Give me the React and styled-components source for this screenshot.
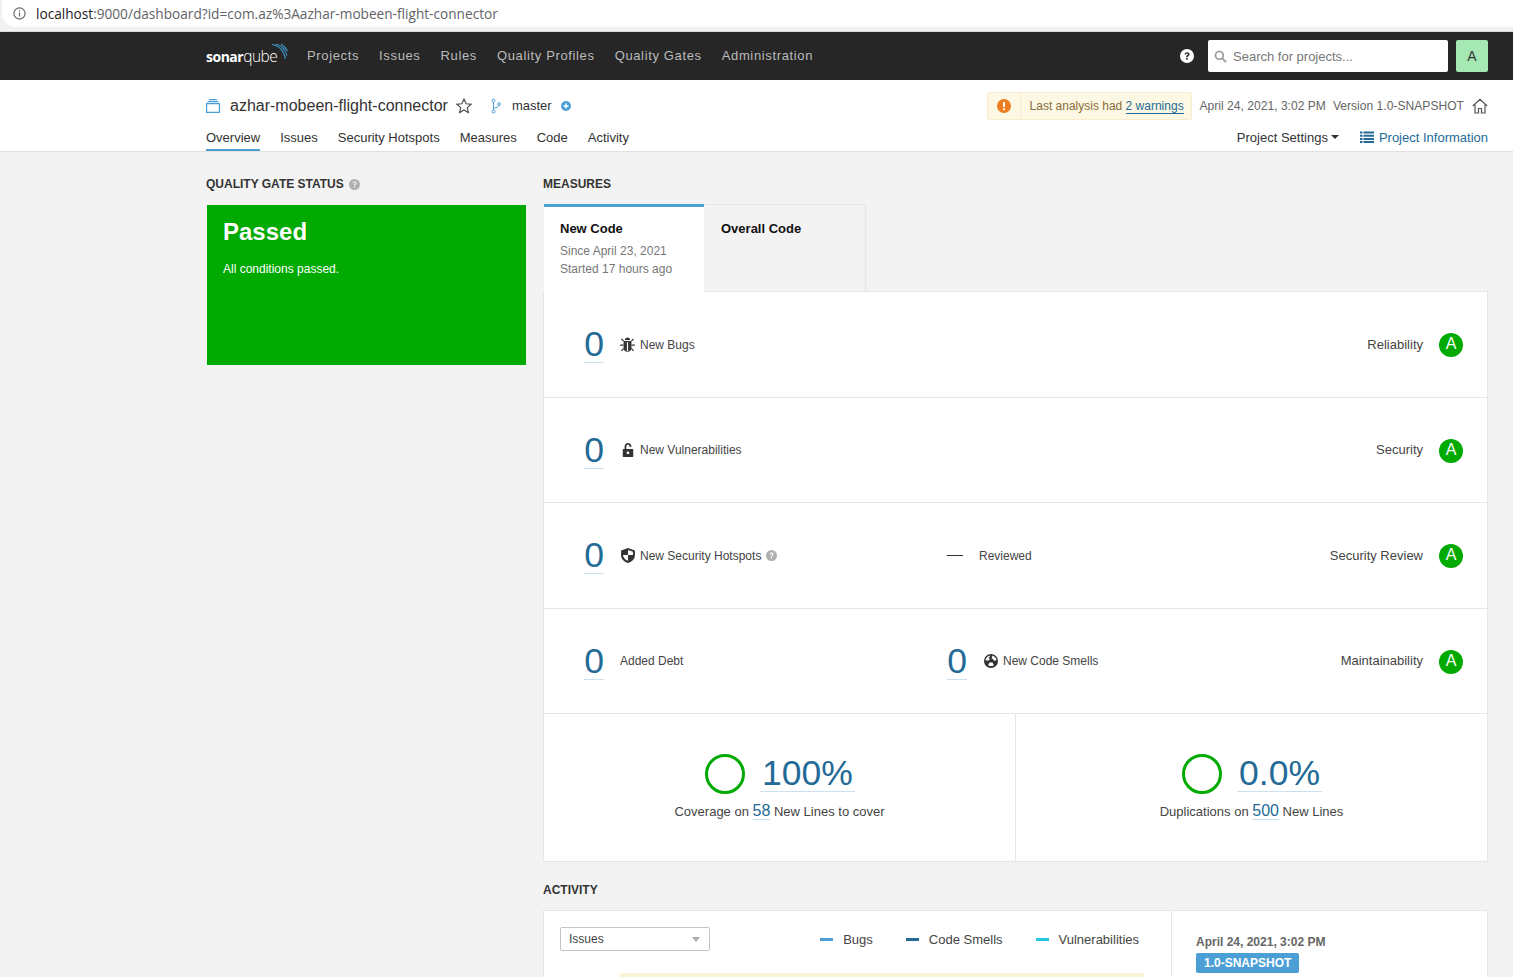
import React from "react";
import styled, { createGlobalStyle } from "styled-components";

const Global = createGlobalStyle`
  html, body { margin: 0; padding: 0; height: 977px; overflow: hidden; background: #f3f3f3; }
  body { font-family: "Liberation Sans", Arial, sans-serif; font-size: 13px; color: #333; }
  * { box-sizing: border-box; }
`;

const BrowserBar = styled.div`
  height: 32px;
  background: #f1f1f1;
  border-bottom: 1px solid #d8d8d8;
  padding: 0 0 4px 2px;
`;
const UrlPill = styled.div`
  height: 27px;
  background: #fff;
  border-radius: 0 0 0 14px;
  display: flex;
  align-items: center;
  padding-left: 11px;
  gap: 10px;
  font-family: "Open Sans", sans-serif;
  font-size: 13.65px;
  color: #5f6368;
  span b { font-weight: 400; color: #202124; }
`;

const Nav = styled.nav`
  height: 48px;
  background: #262626;
  display: flex;
  align-items: center;
  padding: 0 25px 0 206px;
`;
const Logo = styled.div`
  position: relative;
  width: 84px;
  height: 24px;
  margin-right: 17px;
  color: #fff;
  font-family: "Open Sans", sans-serif;
  line-height: 24px;
  white-space: nowrap;
  b { font-weight: 700; font-size: 14px; letter-spacing: -0.5px; }
  span { font-weight: 300; font-size: 15.5px; letter-spacing: -0.5px; }
  svg { position: absolute; right: 1px; top: -1px; }
`;
const NavLink = styled.a`
  color: #bbb;
  font-size: 13px;
  letter-spacing: 0.64px;
  margin: -2px 20px 0 0;
`;
const NavRight = styled.div`
  margin-left: auto;
  display: flex;
  align-items: center;
`;
const Search = styled.div`
  width: 240px;
  height: 32px;
  margin-left: 14px;
  background: #fff;
  border-radius: 2px;
  display: flex;
  align-items: center;
  padding-left: 6px;
  gap: 6px;
  color: #777;
  font-size: 13px;
`;
const Avatar = styled.div`
  width: 32px;
  height: 32px;
  margin-left: 8px;
  background: #a5e8b4;
  border-radius: 2px;
  display: flex;
  align-items: center;
  justify-content: center;
  color: #333;
  font-size: 14px;
`;

const ContextBar = styled.header`
  height: 72px;
  background: #fff;
  border-bottom: 1px solid #e1e1e1;
  padding: 0 25px 0 206px;
`;
const ContextTop = styled.div`
  height: 49px;
  padding-top: 12px;
  display: flex;
  align-items: flex-start;
`;
const Crumbs = styled.div`
  display: flex;
  align-items: center;
  height: 28px;
`;
const ProjectName = styled.span`
  font-size: 16px;
  color: #333;
  margin: 0 8px 0 10px;
`;
const Branch = styled.span`
  font-size: 13px;
  margin: -2px 9px 0 11px;
`;
const ContextRight = styled.div`
  margin-left: auto;
  display: flex;
  align-items: center;
  height: 28px;
  font-size: 12.1px;
  color: #666;
`;
const WarnBox = styled.div`
  height: 28px;
  width: 205px;
  display: flex;
  background: #fcf8e3;
  border: 1px solid #faebcc;
  border-radius: 2px;
  color: #8a6d3b;
  font-size: 12px;
  margin-right: 8px;
`;
const WarnIcon = styled.div`
  width: 33px;
  border-right: 1px solid #faebcc;
  display: flex;
  align-items: center;
  justify-content: center;
`;
const WarnText = styled.div`
  padding-left: 9px;
  line-height: 26px;
  white-space: nowrap;
  a { color: #236a97; border-bottom: 1px solid #236a97; }
`;
const Version = styled.span`
  margin: 0 8px 0 7px;
`;
const ContextBottom = styled.div`
  display: flex;
  align-items: flex-start;
  justify-content: space-between;
  height: 22px;
`;
const Tabs = styled.div`
  display: flex;
  gap: 20px;
`;
const Tab = styled.a`
  height: 22px;
  line-height: 18px;
  font-size: 13px;
  color: #333;
  border-bottom: 2px solid ${(p) => (p.$active ? "#4b9fd5" : "transparent")};
`;
const ContextActions = styled.div`
  display: flex;
  align-items: center;
  height: 16px;
`;
const Settings = styled.span`
  display: flex;
  align-items: center;
  gap: 3px;
  font-size: 13px;
  margin-right: 21px;
  &::after {
    content: "";
    border: 4px solid transparent;
    border-top-color: #333;
    border-bottom: 0;
  }
`;
const InfoLink = styled.a`
  display: flex;
  align-items: center;
  gap: 5px;
  color: #236a97;
  font-size: 13px;
`;

const Page = styled.main`
  display: grid;
  grid-template-columns: 320px 945px;
  column-gap: 17px;
  padding: 25px 25px 0 206px;
  height: 825px;
  overflow: hidden;
`;
const Heading = styled.h3`
  margin: 0 0 14px;
  height: 14px;
  font-size: 12px;
  line-height: 14px;
  font-weight: 700;
  color: #333;
  display: flex;
  align-items: center;
  gap: 5px;
`;
const GateBox = styled.div`
  margin-left: 1px;
  height: 160px;
  background: #00aa00;
  color: #fff;
  padding: 12px 16px;
`;
const GateTitle = styled.div`
  font-size: 24px;
  font-weight: 700;
  line-height: 30px;
  margin-bottom: 14px;
`;
const GateText = styled.div`
  font-size: 12px;
  line-height: 16px;
`;

const PeriodTabs = styled.div`
  display: flex;
  height: 88px;
  margin-left: 1px;
  margin-top: -1px;
  position: relative;
  z-index: 1;
`;
const PeriodTab = styled.div`
  width: ${(p) => (p.$active ? "160px" : "161px")};
  height: ${(p) => (p.$active ? "88px" : "87px")};
  padding: ${(p) => (p.$active ? "14px 16px" : "16px 16px")};
  background: ${(p) => (p.$active ? "#fff" : "#f3f3f3")};
  border-top: ${(p) => (p.$active ? "3px solid #4b9fd5" : "1px solid #e6e6e6")};
  border-right: ${(p) => (p.$active ? "0" : "1px solid #e6e6e6")};
  margin-left: ${(p) => (p.$active ? "0" : "1px")};
  font-size: 12px;
  color: #777;
  line-height: 18px;
  b {
    display: block;
    font-size: 13px;
    line-height: 16px;
    color: #111;
    margin-bottom: 5px;
  }
`;
const Panel = styled.section`
  background: #fff;
  border: 1px solid #e6e6e6;
`;
const MeasurePanel = styled(Panel)`
  margin-top: -1px;
`;
const MeasureRow = styled.div`
  height: ${(p) => p.$h || 105}px;
  display: grid;
  grid-template-columns: 363px 1fr auto;
  align-items: center;
  padding: 0 24px 0 40px;
  border-bottom: 1px solid #e6e6e6;
`;
const Cell = styled.div`
  display: flex;
  align-items: center;
`;
const Value = styled.a`
  display: block;
  color: #236a97;
  font-size: 35.5px;
  line-height: 36px;
  width: 20px;
  text-align: center;
  border-bottom: 1px solid #cce0ed;
  margin-right: 16px;
`;
const Label = styled.span`
  display: flex;
  align-items: center;
  gap: 5px;
  font-size: 12px;
  color: #444;
`;
const IconSlot = styled.span`
  display: flex;
  justify-content: center;
  width: 15px;
`;
const Dash = styled.span`
  width: 16px;
  height: 1px;
  background: #333;
  margin-right: 16px;
`;
const Rating = styled.div`
  display: flex;
  align-items: center;
  gap: 16px;
  font-size: 13px;
  color: #444;
  margin-top: -1px;
`;
const Badge = styled.span`
  width: 24px;
  height: 24px;
  margin-top: 2px;
  border-radius: 50%;
  background: #00aa00;
  color: #fff;
  font-size: 16px;
  line-height: 22px;
  text-align: center;
`;
const CoverRow = styled.div`
  display: grid;
  grid-template-columns: 471px 1fr;
  height: 147px;
`;
const CoverCell = styled.div`
  border-left: ${(p) => (p.$split ? "1px solid #e6e6e6" : "0")};
  display: flex;
  flex-direction: column;
  align-items: center;
  padding-top: 39px;
`;
const CoverTop = styled.div`
  display: flex;
  align-items: center;
  gap: 15px;
  height: 42px;
  margin-left: 1px;
`;
const Ring = styled.span`
  width: 40px;
  height: 40px;
  border-radius: 50%;
  border: 3px solid #00aa00;
`;
const Percent = styled.a`
  color: #236a97;
  font-size: 35.5px;
  line-height: 36px;
  margin-top: -2px;
  padding: 0 2px;
  border-bottom: 1px solid #cce0ed;
`;
const CoverText = styled.div`
  margin-top: 6px;
  font-size: 13px;
  line-height: 20px;
  color: #444;
  a {
    color: #236a97;
    font-size: 16px;
    border-bottom: 1px solid #cce0ed;
  }
`;
const ActivityHead = styled(Heading)`
  margin: 21px 0 13px;
`;
const ActivityPanel = styled(Panel)`
  display: grid;
  grid-template-columns: 628px 1fr;
  height: 200px;
`;
const ChartSide = styled.div`
  padding: 16px;
  border-right: 1px solid #e6e6e6;
`;
const ChartHead = styled.div`
  display: flex;
  align-items: center;
  justify-content: space-between;
`;
const SelectBox = styled.div`
  width: 150px;
  height: 24px;
  border: 1px solid #c4c4c4;
  border-radius: 2px;
  display: flex;
  align-items: center;
  justify-content: space-between;
  padding: 0 9px 0 8px;
  font-size: 12px;
  color: #444;
  &::after {
    content: "";
    border: 4px solid transparent;
    border-top: 5px solid #aaa;
    border-bottom: 0;
  }
`;
const Legend = styled.div`
  display: flex;
  gap: 33px;
  margin-right: 16px;
`;
const LegendItem = styled.span`
  display: flex;
  align-items: center;
  gap: 10px;
  font-size: 13px;
  color: #444;
  &::before {
    content: "";
    width: 13px;
    height: 3px;
    background: ${(p) => p.$color};
  }
`;
const ChartBand = styled.div`
  height: 40px;
  margin: 22px 11px 0 60px;
  background: #fcf4d6;
`;
const EventSide = styled.div`
  padding: 24px;
`;
const EventDate = styled.div`
  font-size: 12px;
  font-weight: 700;
  color: #666;
  line-height: 14px;
`;
const EventTag = styled.span`
  display: inline-block;
  margin-top: 4px;
  padding: 0 8px;
  height: 20px;
  line-height: 20px;
  background: #4b9fd5;
  color: #fff;
  border-radius: 2px;
  font-size: 12px;
  font-weight: 700;
`;

const BugIcon = () => (
  <svg width="15" height="15" viewBox="0.5 0.5 13 13" fill="#333">
    <path d="M4.6 3.2C4.8 1.8 5.8 1 7 1s2.2.8 2.4 2.2z" />
    <path d="M3.6 4h6.8v6c0 1.9-1.5 3.3-3.4 3.3S3.6 11.9 3.6 10zM6.5 5v7.6h1V5z" fillRule="evenodd" />
    <path d="M1.4 2.6l.7-.7L4 3.8l-.7.7zM12.6 2.6l-.7-.7L10 3.8l.7.7zM.6 7h3v1h-3zM10.4 7h3v1h-3zM3.4 10l.6.8-1.8 2-.8-.7zM10.6 10l-.6.8 1.8 2 .8-.7z" />
  </svg>
);
const LockIcon = () => (
  <svg width="12" height="14" viewBox="2 1 10 12" fill="#333">
    <path d="M3.2 6.2h.9V3.9C4.1 2.2 5.4 1 7 1s2.9 1.2 2.9 2.9v.5H8.4v-.5C8.4 3.1 7.8 2.5 7 2.5S5.6 3.1 5.6 3.9v2.3h5.2c.4 0 .7.3.7.7v5.4c0 .4-.3.7-.7.7H3.2c-.4 0-.7-.3-.7-.7V6.9c0-.4.3-.7.7-.7zM7 8.2a1.2 1.2 0 100 2.4 1.2 1.2 0 000-2.4z" fillRule="evenodd" />
  </svg>
);
const ShieldIcon = () => (
  <svg width="14" height="15" viewBox="1 0.6 12 13" fill="#333">
    <path d="M7 .6l6 2.1v3.9c0 3.3-2.5 5.9-6 6.9-3.5-1-6-3.6-6-6.9V2.7zM7 2.3v4.4H2.7c.2 2.5 2 4.2 4.3 5V6.7h4.3V3.9z" fillRule="evenodd" />
  </svg>
);
const SmellIcon = () => (
  <svg width="14" height="14" viewBox="0 0 14 14" fill="#333">
    <path d="M7 0a7 7 0 110 14A7 7 0 017 0zM5.6 1.6a5.6 5.6 0 00-4 4c-.1.5.2.9.6.9h2.5c.3-.6.6-1 1.1-1.3L4.6 3.4 6 2.6c-.1-.6-.1-1.1-.4-1zM8.4 1.6L7.6 4.6c.8.1 1.4.5 1.8 1.1l.2.8h2.3c.4 0 .7-.4.6-.9a5.6 5.6 0 00-4.100-4zM7 8.6c-.5 0-.9-.1-1.300-.3l-1.300 2.200c-.2.3-.1.7.2.9a5.400 5.400 0 004.800 0c.3-.2.4-.6.2-.9L8.300 8.300c-.4.2-.8.3-1.300.3z" fillRule="evenodd" />
    <circle cx="7" cy="7" r="1" />
  </svg>
);
const HelpIcon = ({ size = 12, color = "#b0b0b0", mark = "#f3f3f3" }) => (
  <svg width={size} height={size} viewBox="0 0 16 16">
    <circle cx="8" cy="8" r="8" fill={color} />
    <path d="M5.3 6.2C5.4 4.5 6.6 3.6 8.1 3.6c1.6 0 2.8 1 2.8 2.4 0 1.1-.6 1.7-1.4 2.2-.6.4-.8.6-.8 1.2H7c0-1.2.4-1.8 1.2-2.3.6-.4.9-.6.9-1.1 0-.5-.4-.8-1-.8-.7 0-1 .4-1.1 1zM7 10.4h1.8v1.8H7z" fill={mark} />
  </svg>
);

const Measure = ({ icon, text, help }) => (
  <Cell>
    <Value>0</Value>
    <Label>
      {icon && <IconSlot>{icon}</IconSlot>}
      {text}
      {help && <HelpIcon size={11} mark="#fff" />}
    </Label>
  </Cell>
);

const Rate = ({ name }) => (
  <Rating>
    {name}
    <Badge>A</Badge>
  </Rating>
);

export default function App() {
  return (
    <>
      <Global />
      <BrowserBar>
        <UrlPill>
          <svg width="13" height="13" viewBox="0 0 14 14" fill="none" stroke="#5f6368" strokeWidth="1.2">
            <circle cx="7" cy="7" r="6" />
            <path d="M7 6v4.2M7 3.6v1.2" />
          </svg>
          <span><b>localhost</b>:9000/dashboard?id=com.az%3Aazhar-mobeen-flight-connector</span>
        </UrlPill>
      </BrowserBar>
      <Nav>
        <Logo>
          <b>sonar</b><span>qube</span>
          <svg width="18" height="20" viewBox="0 0 18 20" fill="none" stroke="#3d8fbf" strokeWidth="1.2">
            <path d="M1 1.5C8 2.5 13 8 14.5 16M5 1C10.5 2.5 14.5 7 16 12.5M10 1C12.5 2.5 15 5 16.5 8" />
          </svg>
        </Logo>
        <NavLink>Projects</NavLink>
        <NavLink>Issues</NavLink>
        <NavLink>Rules</NavLink>
        <NavLink>Quality Profiles</NavLink>
        <NavLink>Quality Gates</NavLink>
        <NavLink>Administration</NavLink>
        <NavRight>
          <HelpIcon size={14} color="#fff" mark="#262626" />
          <Search>
            <svg width="13" height="13" viewBox="0 0 14 14" fill="none" stroke="#999" strokeWidth="1.8">
              <circle cx="5.8" cy="5.8" r="4.2" />
              <path d="M9 9l4 4" />
            </svg>
            Search for projects...
          </Search>
          <Avatar>A</Avatar>
        </NavRight>
      </Nav>
      <ContextBar>
        <ContextTop>
          <Crumbs>
            <svg width="14" height="14" viewBox="0 0 14 14" fill="none" stroke="#4b9fd5" strokeWidth="1.2">
              <path d="M.6 4.6h12.8v8.800H.6zM1.500 2.600h11M3 .7h8" />
            </svg>
            <ProjectName>azhar-mobeen-flight-connector</ProjectName>
            <svg width="16" height="16" viewBox="0 0 16 16" fill="none" stroke="#444" strokeWidth="1.1">
              <path d="M8 1l2.100 4.700 5 .5-3.800 3.400 1.100 5L8 12l-4.400 2.600 1.100-5L.9 6.200l5-.5z" />
            </svg>
            <svg width="10" height="16" viewBox="0 0 10 16" fill="none" stroke="#4b9fd5" strokeWidth="1" style={{ marginLeft: 19 }}>
              <circle cx="2.5" cy="2.5" r="1.5" />
              <circle cx="2.5" cy="13.5" r="1.5" />
              <circle cx="8" cy="6" r="1.3" />
              <path d="M2.500 4v8M2.500 10c3 0 5.500-1 5.500-2.700" />
            </svg>
            <Branch>master</Branch>
            <svg width="10" height="10" viewBox="0 0 10 10">
              <circle cx="5" cy="5" r="5" fill="#4b9fd5" />
              <path d="M5 2.500v5M2.500 5h5" stroke="#fff" strokeWidth="1.5" />
            </svg>
          </Crumbs>
          <ContextRight>
            <WarnBox>
              <WarnIcon>
                <svg width="14" height="14" viewBox="0 0 14 14">
                  <circle cx="7" cy="7" r="7" fill="#ed7d20" />
                  <path d="M6 3h2v5H6zM6 9.300h2v2H6z" fill="#fcf8e3" />
                </svg>
              </WarnIcon>
              <WarnText>Last analysis had <a>2 warnings</a></WarnText>
            </WarnBox>
            April 24, 2021, 3:02 PM
            <Version>Version 1.0-SNAPSHOT</Version>
            <svg width="16" height="16" viewBox="0 0 16 16" fill="none" stroke="#555" strokeWidth="1.2">
              <path d="M.8 8L8 1.300 15.200 8M3 6.500V15h3.500v-4.500h3V15H13V6.500" />
            </svg>
          </ContextRight>
        </ContextTop>
        <ContextBottom>
          <Tabs>
            <Tab $active>Overview</Tab>
            <Tab>Issues</Tab>
            <Tab>Security Hotspots</Tab>
            <Tab>Measures</Tab>
            <Tab>Code</Tab>
            <Tab>Activity</Tab>
          </Tabs>
          <ContextActions>
            <Settings>Project Settings</Settings>
            <InfoLink>
              <svg width="14" height="12" viewBox="0 0 14 12" fill="#236a97">
                <path d="M0 .5h2.500v2H0zM3.500 .5H14v2H3.500zM0 3.700h2.500v2H0zM3.500 3.700H14v2H3.500zM0 6.900h2.500v2H0zM3.500 6.900H14v2H3.500zM0 10h2.500v2H0zM3.500 10H14v2H3.500z" />
              </svg>
              Project Information
            </InfoLink>
          </ContextActions>
        </ContextBottom>
      </ContextBar>
      <Page>
        <div>
          <Heading>QUALITY GATE STATUS <HelpIcon size={11} /></Heading>
          <GateBox>
            <GateTitle>Passed</GateTitle>
            <GateText>All conditions passed.</GateText>
          </GateBox>
        </div>
        <div>
          <Heading>MEASURES</Heading>
          <PeriodTabs>
            <PeriodTab $active>
              <b>New Code</b>
              Since April 23, 2021<br />Started 17 hours ago
            </PeriodTab>
            <PeriodTab><b>Overall Code</b></PeriodTab>
          </PeriodTabs>
          <MeasurePanel>
            <MeasureRow $h={106}>
              <Measure icon={<BugIcon />} text="New Bugs" />
              <span />
              <Rate name="Reliability" />
            </MeasureRow>
            <MeasureRow>
              <Measure icon={<LockIcon />} text="New Vulnerabilities" />
              <span />
              <Rate name="Security" />
            </MeasureRow>
            <MeasureRow $h={106}>
              <Measure icon={<ShieldIcon />} text="New Security Hotspots" help />
              <Cell>
                <Dash />
                <Label>Reviewed</Label>
              </Cell>
              <Rate name="Security Review" />
            </MeasureRow>
            <MeasureRow>
              <Measure text="Added Debt" />
              <Measure icon={<SmellIcon />} text="New Code Smells" />
              <Rate name="Maintainability" />
            </MeasureRow>
            <CoverRow>
              <CoverCell>
                <CoverTop>
                  <Ring />
                  <Percent>100%</Percent>
                </CoverTop>
                <CoverText>Coverage on <a>58</a> New Lines to cover</CoverText>
              </CoverCell>
              <CoverCell $split>
                <CoverTop>
                  <Ring />
                  <Percent>0.0%</Percent>
                </CoverTop>
                <CoverText>Duplications on <a>500</a> New Lines</CoverText>
              </CoverCell>
            </CoverRow>
          </MeasurePanel>
          <ActivityHead>ACTIVITY</ActivityHead>
          <ActivityPanel>
            <ChartSide>
              <ChartHead>
                <SelectBox>Issues</SelectBox>
                <Legend>
                  <LegendItem $color="#4b9fd5">Bugs</LegendItem>
                  <LegendItem $color="#236a97">Code Smells</LegendItem>
                  <LegendItem $color="#24c6e0">Vulnerabilities</LegendItem>
                </Legend>
              </ChartHead>
              <ChartBand />
            </ChartSide>
            <EventSide>
              <EventDate>April 24, 2021, 3:02 PM</EventDate>
              <EventTag>1.0-SNAPSHOT</EventTag>
            </EventSide>
          </ActivityPanel>
        </div>
      </Page>
    </>
  );
}
